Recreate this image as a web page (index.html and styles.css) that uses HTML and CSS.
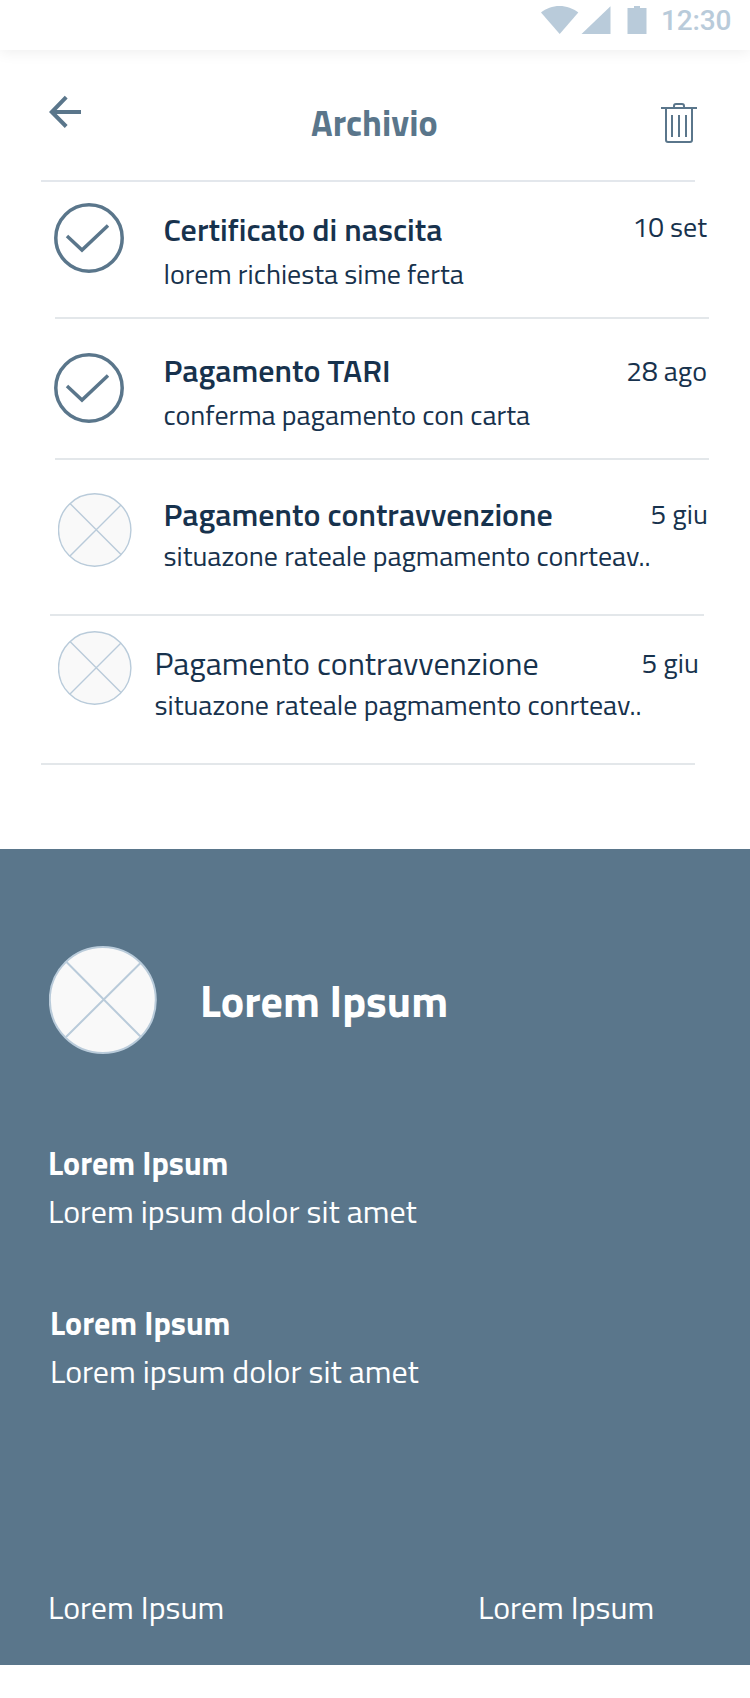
FILE: index.html
```
<!DOCTYPE html>
<html lang="it">
<head>
<meta charset="utf-8">
<title>Archivio</title>
<link rel="stylesheet" href="styles.css">
</head>
<body>
<header class="status">
  <svg class="status-icons" width="108" height="30" viewBox="0 0 108 30" fill="#b9cbda">
    <path d="M0 6.500C5 2.500 11.500 0 18.500 0S32 2.500 37.300 6.500L18.700 28z"/>
    <path d="M40.500 28L69.500 .3V28z"/>
    <path d="M86.500 2H93V0h6v2h6.500v26h-19z"/>
  </svg>
  <span class="clock">12:30</span>
</header>
<main>
  <div class="topbar">
    <svg class="back" width="34" height="34" viewBox="0 0 34 34" fill="none" stroke="#5a768b" stroke-width="4"><path d="M32 17H4M17.200 2.200L2.800 17l14.400 14.500"/></svg>
    <h1 class="title">Archivio</h1>
    <svg class="trash" width="36" height="42" viewBox="0 0 36 42" fill="none" stroke="#5a768b" stroke-width="2"><path d="M0 6h36M5 6v32q0 2 2 2h22q2 0 2-2V6M13 6V4q0-2 2-2h6q2 0 2 2v2M11 13v22M18 13v22M25 13v22"/></svg>
  </div>
  <ul class="list">
    <li class="row r1">
      <svg class="check" width="70" height="70" viewBox="0 0 70 70" fill="none" stroke="#5a768b" stroke-width="3.500"><circle cx="35" cy="35" r="33.200"/><path d="M13 33l15 14L54 22.500"/></svg>
      <div class="text"><span class="name">Certificato di nascita</span><span class="desc">lorem richiesta sime ferta</span></div>
      <span class="date">10 set</span>
    </li>
    <li class="row r2">
      <svg class="check" width="70" height="70" viewBox="0 0 70 70" fill="none" stroke="#5a768b" stroke-width="3.500"><circle cx="35" cy="35" r="33.200"/><path d="M13 33l15 14L54 22.500"/></svg>
      <div class="text"><span class="name">Pagamento TARI</span><span class="desc">conferma pagamento con carta</span></div>
      <span class="date">28 ago</span>
    </li>
    <li class="row r3">
      <svg class="cross" width="74" height="74" viewBox="0 0 74 74" fill="#f9f9f9" stroke="#b9cbda" stroke-width="1.400"><circle cx="36.700" cy="37" r="36.200"/><path d="M12 10.500l51 51M63 12L12 63"/></svg>
      <div class="text"><span class="name">Pagamento contravvenzione</span><span class="desc">situazone rateale pagmamento conrteav..</span></div>
      <span class="date">5 giu</span>
    </li>
    <li class="row r4">
      <svg class="cross" width="74" height="74" viewBox="0 0 74 74" fill="#f9f9f9" stroke="#b9cbda" stroke-width="1.400"><circle cx="36.700" cy="37" r="36.200"/><path d="M12 10.500l51 51M63 12L12 63"/></svg>
      <div class="text"><span class="name read">Pagamento contravvenzione</span><span class="desc">situazone rateale pagmamento conrteav..</span></div>
      <span class="date">5 giu</span>
    </li>
  </ul>
</main>
<section class="panel">
  <div class="profile">
    <svg width="108" height="108" viewBox="0 0 108 108" fill="#f9f9f9" stroke="#b9cbda" stroke-width="2"><circle cx="53.800" cy="54" r="53"/><path d="M17.500 16l74 74.500M91.500 17L17 91"/></svg>
    <h2 class="big">Lorem Ipsum</h2>
  </div>
  <div class="block b1"><span class="strong">Lorem Ipsum</span><span class="light">Lorem ipsum dolor sit amet</span></div>
  <div class="block b2"><span class="strong">Lorem Ipsum</span><span class="light">Lorem ipsum dolor sit amet</span></div>
  <footer class="links"><span class="link">Lorem Ipsum</span><span class="link">Lorem Ipsum</span></footer>
</section>
</body>
</html>
```
FILE: styles.css
```
* { box-sizing: border-box; }
body { margin: 0; background: #fff; color: #17324d; font-family: "Titillium Web", Roboto, sans-serif; white-space: nowrap; }
h1, h2, ul { margin: 0; padding: 0; }
svg { display: block; flex: none; }
.status { height: 50px; display: flex; padding: 6px 0 0 541px; box-shadow: 0 2px 14px rgba(0,0,0,.07); }
.clock { margin-left: 12px; font: 500 28px/29px Roboto, sans-serif; color: #b9cbda; letter-spacing: -.15px; }
.topbar { height: 132px; width: 654px; margin-left: 41px; border-bottom: 2px solid #e3e7ec; display: flex; align-items: flex-start; }
.back { margin: 45px 0 0 8px; }
.title { flex: 1; margin-top: 49px; padding-left: 228px; font-size: 36px; line-height: 48px; font-weight: 700; color: #5a768b; }
.trash { margin: 52px -2px 0 0; }
.list { list-style: none; }
.row { display: flex; width: 654px; border-bottom: 2px solid #e3e7ea; }
.r1 { margin-left: 55px; height: 137px; }
.r2 { margin-left: 55px; height: 141px; }
.r3 { margin-left: 50px; height: 156px; }
.r4 { margin-left: 41px; height: 149px; }
.check { margin-left: -1px; }
.r1 .check { margin-top: 21px; }
.r2 .check { margin-top: 34px; }
.r3 .cross { margin: 33px 0 0 8px; }
.r4 .cross { margin: 15px 0 0 17px; }
.text { flex: 1; margin-left: 39.5px; display: flex; flex-direction: column; }
.r3 .text { margin-left: 31.5px; }
.r4 .text { margin-left: 22.5px; }
.r1 .text { padding-top: 27px; }
.r2 .text { padding-top: 31px; }
.r3 .text { padding-top: 34px; }
.r4 .text { padding-top: 27px; }
.name { font-size: 32px; line-height: 40px; font-weight: 600; }
.read { font-weight: 400; }
.desc { font-size: 28px; line-height: 40px; font-weight: 400; margin-top: 5px; }
.r3 .desc, .r4 .desc { margin-top: 2px; }
.date { font-size: 28px; line-height: 40px; font-weight: 400; margin-right: 2px; }
.r1 .date { margin-top: 25px; }
.r2 .date { margin-top: 32px; }
.r3 .date { margin: 34px -3.5px 0 0; }
.r4 .date { margin: 27px -3.5px 0 0; }
.panel { margin-top: 84px; height: 816px; background: #5a768b; color: #fff; padding: 97px 0 0 48px; }
.profile { display: flex; height: 108px; }
.profile svg { margin-left: 1px; }
.big { margin: 25px 0 0 43px; font-size: 44px; line-height: 60px; font-weight: 700; }
.block { display: flex; flex-direction: column; }
.b1 { margin-top: 85px; }
.b2 { margin: 64px 0 0 2px; }
.strong { font-size: 32px; line-height: 48px; font-weight: 700; }
.light, .link { font-size: 32px; line-height: 48px; font-weight: 400; }
.links { display: flex; margin-top: 188px; }
.link { flex: 0 0 430px; }
.link + .link { flex: none; }
```
